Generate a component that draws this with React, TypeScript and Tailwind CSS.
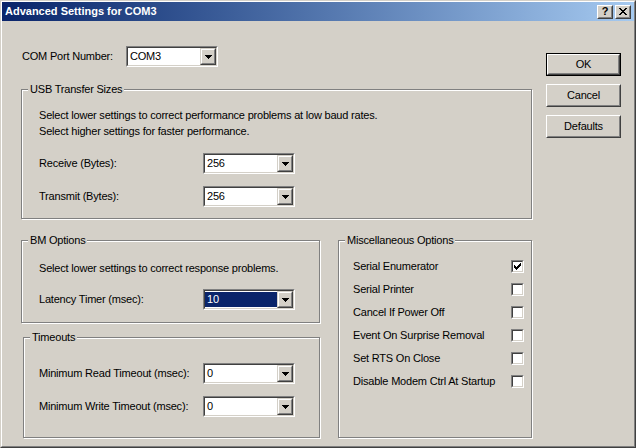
import React from 'react';

const DropButton = () => (
  <div className="flex h-[17px] w-[16px] shrink-0 border border-t-[#d4d0c8] border-l-[#d4d0c8] border-r-[#404040] border-b-[#404040]">
    <div className="flex flex-1 items-center justify-center border border-t-white border-l-white border-r-[#808080] border-b-[#808080] bg-[#d4d0c8]">
      <svg width="7" height="4" viewBox="0 0 7 4" shapeRendering="crispEdges">
        <polygon points="0,0 7,0 3.5,4" fill="#000" />
      </svg>
    </div>
  </div>
);

const Combo = ({ value, selected = false }: { value: string; selected?: boolean }) => (
  <div className="flex h-[21px] w-[92px] shrink-0 border border-t-[#808080] border-l-[#808080] border-r-white border-b-white">
    <div className="flex flex-1 border border-t-[#404040] border-l-[#404040] border-r-[#d4d0c8] border-b-[#d4d0c8] bg-white">
      <div className="flex flex-1 items-center py-[1px]">
        <div className={'flex h-full flex-1 items-center pl-[2px] ' + (selected ? 'bg-[#0a246a] text-white' : '')}>
          {value}
        </div>
      </div>
      <DropButton />
    </div>
  </div>
);

const CheckBox = ({ checked = false }: { checked?: boolean }) => (
  <div className="flex h-[13px] w-[13px] shrink-0 border border-t-[#808080] border-l-[#808080] border-r-white border-b-white">
    <div className="flex flex-1 items-center justify-center border border-t-[#404040] border-l-[#404040] border-r-[#d4d0c8] border-b-[#d4d0c8] bg-white">
      {checked && (
        <svg width="7" height="7" viewBox="0 0 7 7" shapeRendering="crispEdges">
          <rect x="0" y="2" width="1" height="3" fill="#000" />
          <rect x="1" y="3" width="1" height="3" fill="#000" />
          <rect x="2" y="4" width="1" height="3" fill="#000" />
          <rect x="3" y="3" width="1" height="3" fill="#000" />
          <rect x="4" y="2" width="1" height="3" fill="#000" />
          <rect x="5" y="1" width="1" height="3" fill="#000" />
          <rect x="6" y="0" width="1" height="3" fill="#000" />
        </svg>
      )}
    </div>
  </div>
);

const Button = ({ label, isDefault = false }: { label: string; isDefault?: boolean }) => {
  const inner = (
    <div className="flex flex-1 border border-t-white border-l-white border-r-[#404040] border-b-[#404040]">
      <div className="flex flex-1 items-center justify-center border border-t-[#d4d0c8] border-l-[#d4d0c8] border-r-[#808080] border-b-[#808080]">
        {label}
      </div>
    </div>
  );
  return (
    <div className={'flex h-[23px] w-[75px] ' + (isDefault ? 'border border-black' : '')}>{inner}</div>
  );
};

// etched group box, inner padding goes on the wrapper so the legend stays put
const Group = ({ title, className, inner, children }: { title: string; className: string; inner: string; children: React.ReactNode }) => (
  <fieldset className={'border border-[#808080] shadow-[inset_1px_1px_0_#fff,1px_1px_0_#fff] ' + className}>
    <legend className="ml-[6px] bg-[#d4d0c8] px-[2px] leading-[13px]">{title}</legend>
    <div className={inner}>{children}</div>
  </fieldset>
);

const Row = ({ label, value, selected }: { label: string; value: string; selected?: boolean }) => (
  <div className="flex h-[21px] items-center">
    <div className="w-[164px]">{label}</div>
    <Combo value={value} selected={selected} />
  </div>
);

const misc = [
  { label: 'Serial Enumerator', checked: true },
  { label: 'Serial Printer', checked: false },
  { label: 'Cancel If Power Off', checked: false },
  { label: 'Event On Surprise Removal', checked: false },
  { label: 'Set RTS On Close', checked: false },
  { label: 'Disable Modem Ctrl At Startup', checked: false },
];

export default function App() {
  return (
    <div className="flex h-[448px] w-[636px] flex-col bg-[#d4d0c8] font-['Liberation_Sans',Arial,sans-serif] text-[11px] text-black">
      <div className="flex flex-1 flex-col border border-t-[#d4d0c8] border-l-[#d4d0c8] border-r-[#404040] border-b-[#404040]">
        <div className="flex flex-1 flex-col border border-t-white border-l-white border-r-[#808080] border-b-[#808080]">
          {/* title bar */}
          <div className="flex h-[19px] items-center bg-gradient-to-r from-[#0a246a] to-[#a6caf0] pl-[3px] pr-[3px]">
            <div className="flex-1 font-bold text-white">Advanced Settings for COM3</div>
            <div className="flex h-[14px] w-[16px] border border-t-white border-l-white border-r-[#404040] border-b-[#404040]">
              <div className="flex flex-1 items-center justify-center border border-t-[#d4d0c8] border-l-[#d4d0c8] border-r-[#808080] border-b-[#808080] bg-[#d4d0c8] text-[11px] font-bold leading-none">
                ?
              </div>
            </div>
            <div className="ml-[2px] flex h-[14px] w-[16px] border border-t-white border-l-white border-r-[#404040] border-b-[#404040]">
              <div className="flex flex-1 items-center justify-center border border-t-[#d4d0c8] border-l-[#d4d0c8] border-r-[#808080] border-b-[#808080] bg-[#d4d0c8]">
                <svg width="8" height="7" viewBox="0 0 8 7" shapeRendering="crispEdges">
                  <path d="M0 0h2v1h-2zM6 0h2v1h-2zM1 1h2v1h-2zM5 1h2v1h-2zM2 2h4v1h-4zM3 3h2v1h-2zM2 4h4v1h-4zM1 5h2v1h-2zM5 5h2v1h-2zM0 6h2v1h-2zM6 6h2v1h-2z" fill="#000" />
                </svg>
              </div>
            </div>
          </div>

          {/* body */}
          <div className="flex pl-[19px] tracking-[-0.2px]">
            <div className="flex w-[512px] flex-col">
              <div className="mt-[25px] flex h-[21px] items-center">
                <div className="ml-[1px] w-[104px]">COM Port Number:</div>
                <Combo value="COM3" />
              </div>

              <Group title="USB Transfer Sizes" className="mt-[16px] h-[136px] w-[511px]" inner="pl-[17px]">
                <div className="pt-[11px] leading-[16px]">
                  <div>Select lower settings to correct performance problems at low baud rates.</div>
                  <div>Select higher settings for faster performance.</div>
                </div>
                <div className="mt-[14px]">
                  <Row label="Receive (Bytes):" value="256" />
                </div>
                <div className="mt-[12px]">
                  <Row label="Transmit (Bytes):" value="256" />
                </div>
              </Group>

              <div className="mt-[15px] flex">
                <div className="flex w-[300px] flex-col">
                  <Group title="BM Options" className="h-[89px] w-[299px]" inner="pl-[17px]">
                    <div className="pt-[13px] leading-[16px]">Select lower settings to correct response problems.</div>
                    <div className="mt-[13px]">
                      <Row label="Latency Timer (msec):" value="10" selected />
                    </div>
                  </Group>
                  <Group title="Timeouts" className="mt-[8px] ml-[2px] h-[107px] w-[297px]" inner="pl-[15px]">
                    <div className="pt-[19px]">
                      <Row label="Minimum Read Timeout (msec):" value="0" />
                    </div>
                    <div className="mt-[12px]">
                      <Row label="Minimum Write Timeout (msec):" value="0" />
                    </div>
                  </Group>
                </div>
                <Group title="Miscellaneous Options" className="ml-[17px] h-[204px] w-[194px]" inner="pl-[14px] pr-[7px] pt-[8px]">
                  {misc.map((m) => (
                    <div key={m.label} className="flex h-[23px] items-center justify-between">
                      <span>{m.label}</span>
                      <CheckBox checked={m.checked} />
                    </div>
                  ))}
                </Group>
              </div>
            </div>

            <div className="ml-[13px] flex flex-col gap-[8px] pt-[32px]">
              <Button label="OK" isDefault />
              <Button label="Cancel" />
              <Button label="Defaults" />
            </div>
          </div>
        </div>
      </div>
    </div>
  );
}
